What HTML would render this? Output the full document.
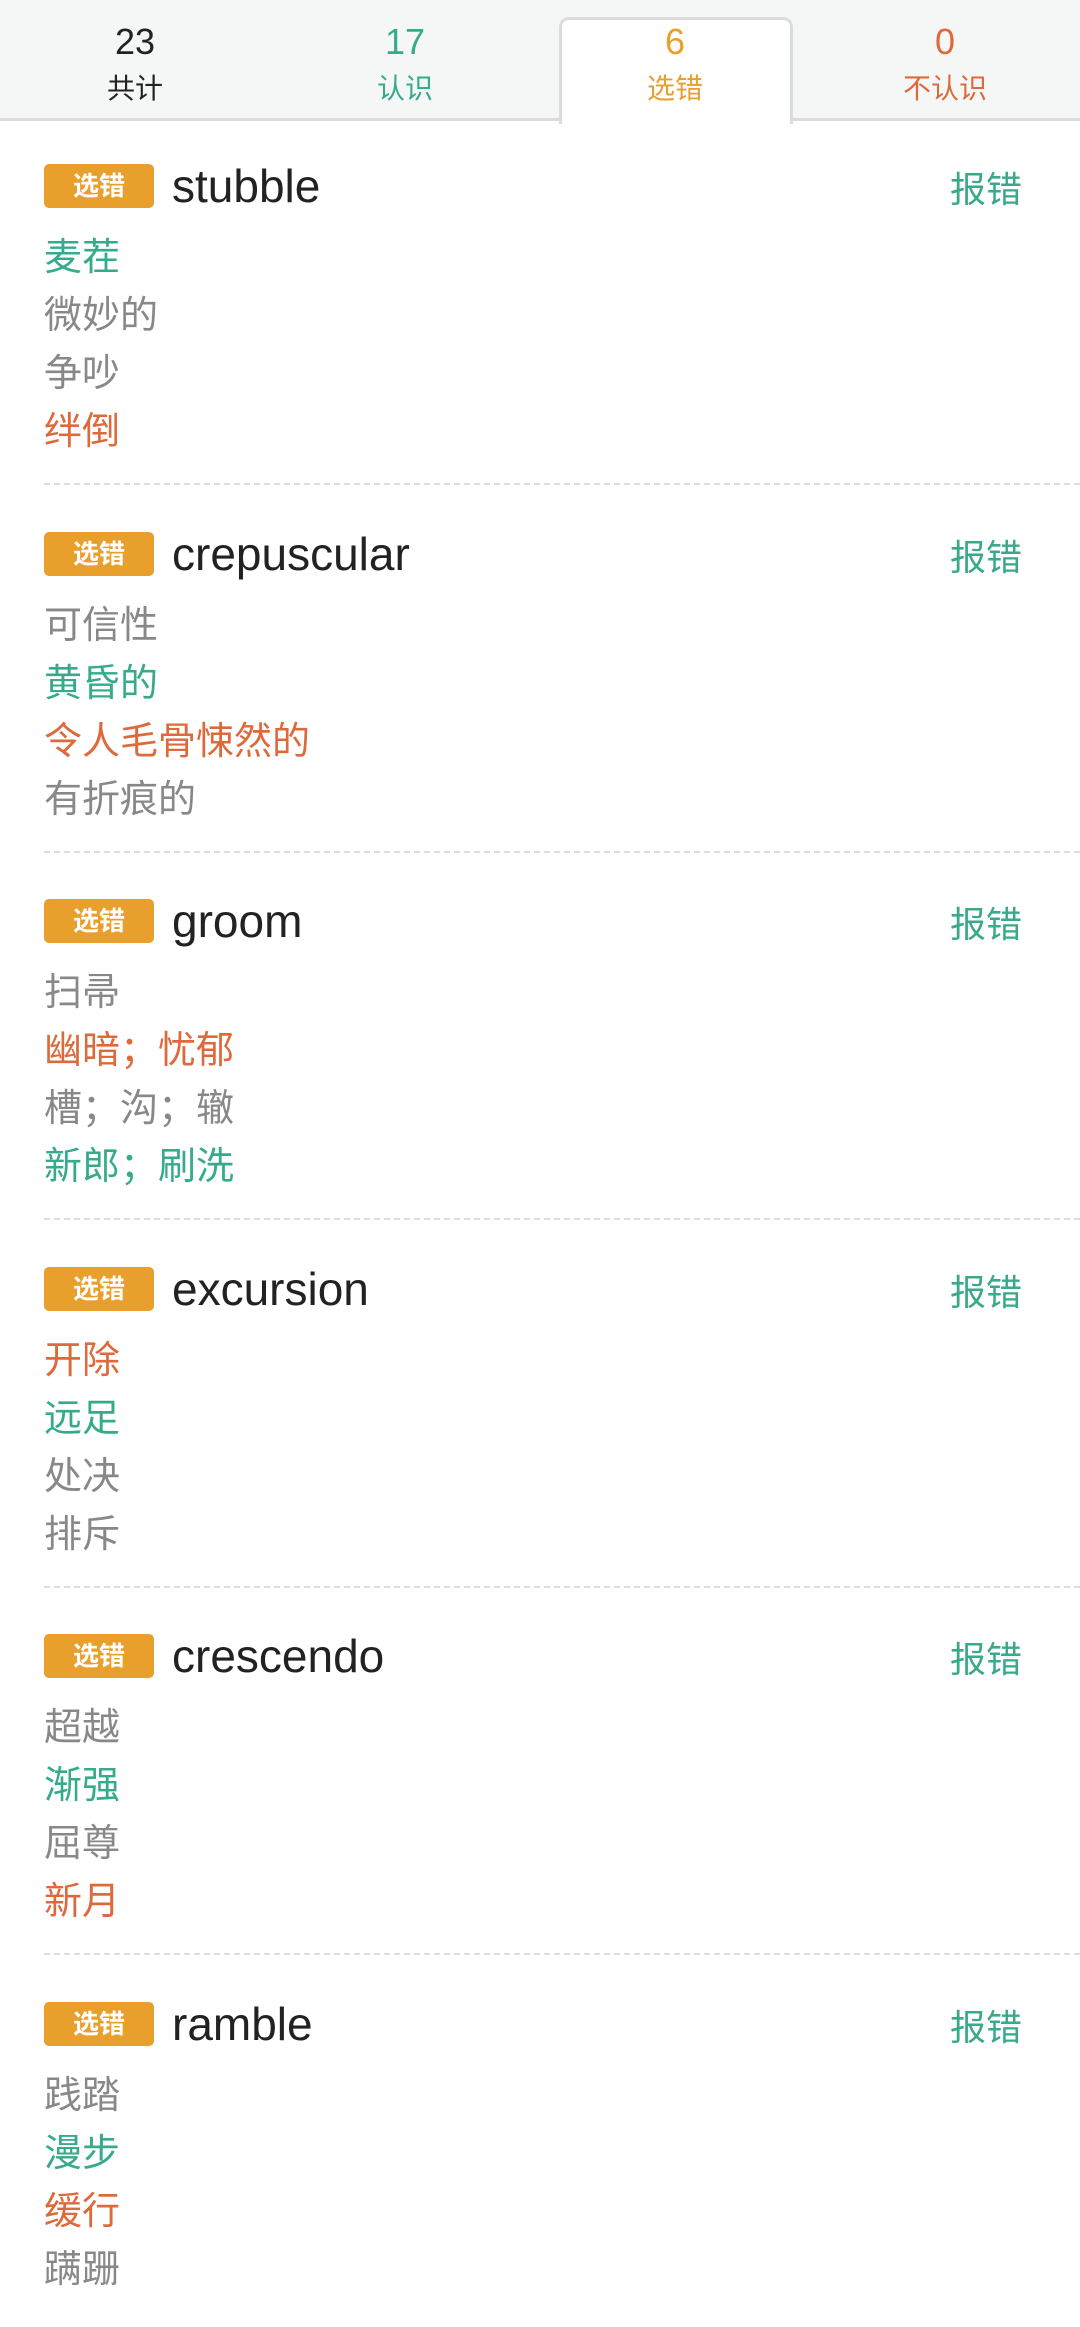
<!DOCTYPE html>
<html><head><meta charset="utf-8"><style>
*{margin:0;padding:0;box-sizing:border-box}
body{width:1080px;height:2320px;background:#fff;position:relative;overflow:hidden;font-family:"Liberation Sans","Noto Sans CJK SC",sans-serif}
.hdr{position:absolute;left:0;top:0;width:1080px;height:121px;background:#f5f7f7;border-bottom:3px solid #dcdcdc}
.act{position:absolute;left:559px;top:17px;width:234px;height:107px;background:#fff;border:3px solid #dcdcdc;border-bottom:none;border-radius:10px 10px 0 0}
.tab{position:absolute;top:0;width:270px;text-align:center}
.tab .n{position:absolute;top:20px;width:100%;font-size:36px;line-height:44px}
.tab .l{position:absolute;top:71px;width:100%;font-size:28px;line-height:36px}
.g{position:absolute;left:0;width:1080px;height:368px}
.b{position:absolute;left:44px;top:43px;width:110px;height:44px;background:#e99f2c;border-radius:5px;color:#fff;font-weight:bold;font-size:26px;line-height:44px;text-align:center}
.w{position:absolute;left:172px;top:37px;font-size:46px;line-height:56px;color:#222}
.r{position:absolute;left:950px;top:47px;font-size:36px;line-height:44px;color:#3aa88a}
.m{position:absolute;left:44px;font-size:38px;line-height:50px}
.d{position:absolute;left:44px;right:0;top:362px;border-top:2px dashed #ddd}
.G{color:#36ab8c}.Y{color:#888}.O{color:#de6a3c}
</style></head><body>
<div class="hdr"></div>
<div class="act"></div>
<div class="tab" style="left:0"><div class="n" style="color:#222">23</div><div class="l" style="color:#222">共计</div></div>
<div class="tab" style="left:270px"><div class="n" style="color:#36ab8c">17</div><div class="l" style="color:#36ab8c">认识</div></div>
<div class="tab" style="left:540px"><div class="n" style="color:#e99f2c">6</div><div class="l" style="color:#e99f2c">选错</div></div>
<div class="tab" style="left:810px"><div class="n" style="color:#de6a3c">0</div><div class="l" style="color:#de6a3c">不认识</div></div>

<div class="g" style="top:121px"><div class="b">选错</div><div class="w">stubble</div><div class="r">报错</div>
<div class="m G" style="top:112px">麦茬</div><div class="m Y" style="top:170px">微妙的</div><div class="m Y" style="top:228px">争吵</div><div class="m O" style="top:286px">绊倒</div><div class="d"></div></div>

<div class="g" style="top:489px"><div class="b">选错</div><div class="w">crepuscular</div><div class="r">报错</div>
<div class="m Y" style="top:112px">可信性</div><div class="m G" style="top:170px">黄昏的</div><div class="m O" style="top:228px">令人毛骨悚然的</div><div class="m Y" style="top:286px">有折痕的</div><div class="d"></div></div>

<div class="g" style="top:856px"><div class="b">选错</div><div class="w">groom</div><div class="r">报错</div>
<div class="m Y" style="top:112px">扫帚</div><div class="m O" style="top:170px">幽暗；忧郁</div><div class="m Y" style="top:228px">槽；沟；辙</div><div class="m G" style="top:286px">新郎；刷洗</div><div class="d"></div></div>

<div class="g" style="top:1224px"><div class="b">选错</div><div class="w">excursion</div><div class="r">报错</div>
<div class="m O" style="top:112px">开除</div><div class="m G" style="top:170px">远足</div><div class="m Y" style="top:228px">处决</div><div class="m Y" style="top:286px">排斥</div><div class="d"></div></div>

<div class="g" style="top:1591px"><div class="b">选错</div><div class="w">crescendo</div><div class="r">报错</div>
<div class="m Y" style="top:112px">超越</div><div class="m G" style="top:170px">渐强</div><div class="m Y" style="top:228px">屈尊</div><div class="m O" style="top:286px">新月</div><div class="d"></div></div>

<div class="g" style="top:1959px"><div class="b">选错</div><div class="w">ramble</div><div class="r">报错</div>
<div class="m Y" style="top:112px">践踏</div><div class="m G" style="top:170px">漫步</div><div class="m O" style="top:228px">缓行</div><div class="m Y" style="top:286px">蹒跚</div></div>
</body></html>
